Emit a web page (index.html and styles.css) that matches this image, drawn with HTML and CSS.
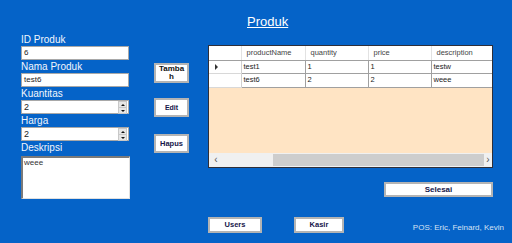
FILE: index.html
```html
<!DOCTYPE html>
<html>
<head>
<title>Produk</title>
<link rel="stylesheet" href="styles.css">
</head>
<body>
<div class="title">Produk</div>

<div class="main">
  <div class="form">
    <div class="lbl">ID Produk</div>
    <div class="field">6</div>
    <div class="lbl">Nama Produk</div>
    <div class="field">test6</div>
    <div class="lbl">Kuantitas</div>
    <div class="field num">2<span class="spin"><i class="up"></i><i class="down"></i></span></div>
    <div class="lbl">Harga</div>
    <div class="field num">2<span class="spin"><i class="up"></i><i class="down"></i></span></div>
    <div class="lbl">Deskripsi</div>
    <div class="area">weee</div>
  </div>

  <div class="actions">
    <button class="btn tambah">Tamba<br>h</button>
    <button class="btn edit">Edit</button>
    <button class="btn hapus">Hapus</button>
  </div>

  <div class="side">
    <div class="grid">
      <table>
        <tr class="head">
          <td class="rh"></td>
          <td>productName</td>
          <td>quantity</td>
          <td>price</td>
          <td>description</td>
        </tr>
        <tr>
          <td class="rh"><span class="cur"></span></td>
          <td>test1</td>
          <td>1</td>
          <td>1</td>
          <td>testw</td>
        </tr>
        <tr>
          <td class="rh"></td>
          <td>test6</td>
          <td>2</td>
          <td>2</td>
          <td>weee</td>
        </tr>
      </table>
      <div class="empty"></div>
      <div class="hscroll">
        <span class="arrow">&lsaquo;</span>
        <span class="track"></span>
        <span class="thumb"></span>
        <span class="arrow right">&rsaquo;</span>
      </div>
    </div>
    <button class="btn selesai">Selesai</button>
  </div>
</div>

<div class="footer">
  <button class="btn users">Users</button>
  <button class="btn kasir">Kasir</button>
  <span class="credit">POS: Eric, Feinard, Kevin</span>
</div>
</body>
</html>
```

FILE: styles.css
```css
body{
    margin:0;
    width:512px;
    height:243px;
    overflow:hidden;
    background-color:#0563c8;
    color:#fff;
    font-family:"Liberation Sans", Arial, sans-serif;
}
.title{
    padding:14px 0 0 247px;
    font-size:13px;
    line-height:15px;
    text-decoration:underline;
}
.main{
    display:flex;
    align-items:flex-start;
    margin-top:5px;
    padding-left:21px;
}
.form{
    width:108px;
}
.lbl{
    font-size:10px;
    line-height:12px;
    color:#f2f6fc;
}
.field{
    position:relative;
    box-sizing:border-box;
    height:14px;
    margin-bottom:1px;
    padding-left:2px;
    background-color:#fff;
    border:1px solid #a8a8a8;
    color:#222;
    font-size:8px;
    line-height:12px;
}
.num{
    font-size:9px;
}
.spin{
    position:absolute;
    right:1px;
    top:0;
    width:9px;
    height:12px;
    display:flex;
    flex-direction:column;
}
.spin i{
    flex:1;
    display:flex;
    align-items:center;
    justify-content:center;
    background-color:#e6e6e6;
    border:1px solid #c8c8c8;
    margin-bottom:-1px;
}
.spin i::after{
    content:"";
    border-left:2px solid transparent;
    border-right:2px solid transparent;
}
.spin .up::after{
    border-bottom:2px solid #111;
}
.spin .down::after{
    border-top:2px solid #111;
}
.area{
    box-sizing:border-box;
    width:109px;
    height:43px;
    margin-top:2px;
    padding-left:1px;
    background-color:#fff;
    border:1px solid #e0e0e0;
    border-top:2px solid #7a7a7a;
    border-left:2px solid #7a7a7a;
    color:#333;
    font-size:8px;
    line-height:9px;
}
.btn{
    box-sizing:border-box;
    display:block;
    margin:0;
    padding:0;
    background-color:#fff;
    border:2px solid #b4b4b4;
    color:#15154a;
    font-family:"Liberation Sans", Arial, sans-serif;
    font-weight:bold;
    font-size:7px;
    line-height:8px;
}
.actions{
    width:35px;
    margin-left:25px;
    padding-top:29px;
    display:flex;
    flex-direction:column;
}
.tambah{
    height:20px;
    font-size:8px;
    line-height:8px;
    color:#111;
}
.edit{
    height:19px;
    margin-top:15px;
}
.hapus{
    height:19px;
    margin-top:17px;
    font-size:7.5px;
}
.side{
    width:285px;
    margin-left:19px;
    padding-top:11px;
    display:flex;
    flex-direction:column;
}
.grid{
    height:123px;
    box-sizing:border-box;
    border:1px solid #2e2e38;
    background-color:#ffe4c4;
}
table{
    width:283px;
    border-collapse:collapse;
    table-layout:fixed;
    background-color:#fff;
}
td{
    box-sizing:border-box;
    height:13px;
    padding:0 0 0 2px;
    border-right:1px solid #a0a0a0;
    border-bottom:1px solid #a0a0a0;
    color:#222;
    font-size:7.5px;
    line-height:12px;
    white-space:nowrap;
    overflow:hidden;
}
td:nth-child(1){width:32px;}
td:nth-child(2){width:64px;}
td:nth-child(3),td:nth-child(4){width:63px;}
td:last-child{border-right:none;}
.head td{
    height:14px;
    padding-left:5px;
    color:#444;
    border-right-color:#e2e2e2;
    border-bottom-color:#a0a0a0;
}
.head td.rh{
    padding-left:2px;
}
tr:last-child td{height:14px;}
.rh{
    border-right-color:#d0d0d0;
    border-bottom-color:#d8d8d8;
}
.cur{
    display:inline-block;
    margin-left:4px;
    border-left:3px solid #333;
    border-top:3px solid transparent;
    border-bottom:3px solid transparent;
    vertical-align:middle;
}
.empty{
    height:65px;
}
.hscroll{
    height:14px;
    display:flex;
    align-items:center;
    background-color:#f0f0f0;
}
.arrow{
    width:14px;
    text-align:center;
    color:#555;
    font-size:10px;
    line-height:14px;
}
.track{
    width:50px;
}
.thumb{
    width:211px;
    height:12px;
    background-color:#cdcdcd;
}
.arrow.right{
    flex:1;
    width:auto;
}
.selesai{
    align-self:flex-end;
    width:109px;
    height:15px;
    margin-top:14px;
    font-size:8px;
}
.footer{
    display:flex;
    align-items:flex-end;
    margin-top:18px;
    padding-left:208px;
}
.users{
    width:54px;
    height:16px;
    font-size:7.5px;
}
.kasir{
    width:50px;
    height:16px;
    margin-left:32px;
    font-size:7.5px;
}
.credit{
    margin-left:auto;
    padding-right:8px;
    color:#d6e2f4;
    font-size:8px;
    line-height:10px;
}
```
